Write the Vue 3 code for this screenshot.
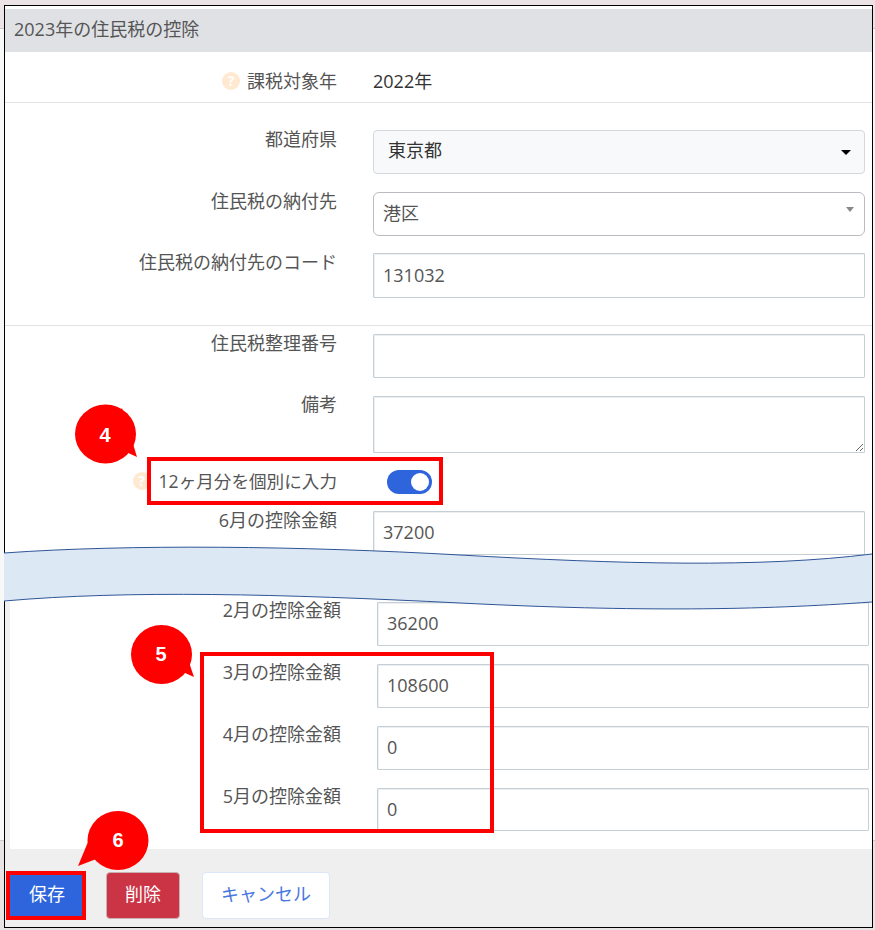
<script setup>
const upper = [
  { label: '住民税整理番号', value: '' }
]
const lower = [
  { label: '2月の控除金額', value: '36200' },
  { label: '3月の控除金額', value: '108600' },
  { label: '4月の控除金額', value: '0' },
  { label: '5月の控除金額', value: '0' }
]
const callouts = [
  { n: '4', cx: 105.5, cy: 434, tail: '122,408 137,457 100,440' },
  { n: '5', cx: 161.5, cy: 654.5, tail: '178,630 194,677 156,660' },
  { n: '6', cx: 118, cy: 840.5, tail: '98,818 78,866 125,848' }
]
</script>

<template>
  <div class="page">
    <div class="frame">
      <h2 class="head">2023年の住民税の控除</h2>

      <div class="tax-year">
        <div class="label-cell">
          <span class="help">?</span>
          <span>課税対象年</span>
        </div>
        <div class="year">2022年</div>
      </div>

      <section class="group first">
        <div class="field">
          <label class="lab">都道府県</label>
          <div class="select pref">東京都<i class="caret dark"></i></div>
        </div>
        <div class="field">
          <label class="lab">住民税の納付先</label>
          <div class="select city">港区<i class="caret grey"></i></div>
        </div>
        <div class="field">
          <label class="lab">住民税の納付先のコード</label>
          <input class="input tall" value="131032" readonly />
        </div>
      </section>

      <section class="group second">
        <div v-for="r in upper" :key="r.label" class="field">
          <label class="lab">{{ r.label }}</label>
          <input class="input" :value="r.value" readonly />
        </div>
        <div class="field">
          <label class="lab memo">備考</label>
          <textarea class="input area" readonly></textarea>
        </div>
        <div class="field toggle-row">
          <div class="toggle-label">
            <span class="help small">?</span>
            <span>12ヶ月分を個別に入力</span>
          </div>
          <span class="switch"><i></i></span>
        </div>
        <div class="field june">
          <label class="lab">6月の控除金額</label>
          <input class="input" value="37200" readonly />
        </div>
      </section>

      <section class="group shifted">
        <div v-for="r in lower" :key="r.label" class="field">
          <label class="lab">{{ r.label }}</label>
          <input class="input" :value="r.value" readonly />
        </div>
      </section>

      <footer class="foot">
        <button class="btn save">保存</button>
        <button class="btn del">削除</button>
        <button class="btn cancel">キャンセル</button>
      </footer>
    </div>

    <svg class="wave" width="875" height="930" viewBox="0 0 875 930">
      <path
        d="M4 553 C 130 544 300 546 460 555 S 760 568 872 554 L 872 602 C 760 610 640 612 460 603 S 130 590 4 601 Z"
        fill="#dde8f5"
      />
      <path d="M4 553 C 130 544 300 546 460 555 S 760 568 872 554" fill="none" stroke="#2f5597" stroke-width="1" />
      <path d="M4 601 C 130 590 280 594 460 603 S 760 610 872 602" fill="none" stroke="#2f5597" stroke-width="1" />
    </svg>

    <div class="mark m4"></div>
    <div class="mark m5"></div>
    <div class="mark m6"></div>

    <svg class="wave" width="875" height="930" viewBox="0 0 875 930">
      <g v-for="c in callouts" :key="c.n">
        <polygon :points="c.tail" fill="#ff0000" />
        <ellipse :cx="c.cx" :cy="c.cy" rx="30.5" ry="29.5" fill="#ff0000" />
      </g>
    </svg>
    <span class="num n4">4</span>
    <span class="num n5">5</span>
    <span class="num n6">6</span>
  </div>
</template>

<style>
html, body { margin: 0; overflow: hidden; background: #eee3e7; }
</style>

<style scoped>
.page {
  position: relative;
  width: 875px;
  height: 930px;
  box-sizing: border-box;
  padding: 5px 2px 2px 4px;
  background: linear-gradient(#ece3e7 0 28px, #c9c9c9 28px 29px, #f8f8f8 29px 840px, #c9c9c9 840px 841px, #e9e4e4 841px);
  font-family: "Open Sans", "Noto Sans CJK JP", sans-serif;
  font-size: 18px;
  line-height: 26px;
  color: #4a4a4a;
}
.frame {
  box-sizing: border-box;
  height: 923px;
  border: 1px solid #000;
  background: #fff;
  padding-top: 3px;
  display: flex;
  flex-direction: column;
}
.head {
  margin: 0;
  height: 43px;
  padding: 0 9px;
  background: #dfe1e5;
  font-size: 18px;
  font-weight: 400;
  line-height: 41px;
  color: #555;
}
.tax-year {
  display: grid;
  grid-template-columns: 332px 1fr;
  column-gap: 36px;
  align-items: center;
  height: 51px;
  box-sizing: border-box;
  border-bottom: 1px solid #e2e3e5;
  padding-top: 8px;
}
.label-cell {
  display: flex;
  justify-content: flex-end;
  align-items: center;
  gap: 7px;
  color: #555;
}
.year { color: #333; }
.help {
  flex: none;
  width: 18px;
  height: 18px;
  border-radius: 50%;
  background: #ffe9d1;
  color: #fff;
  font-size: 14px;
  font-weight: 700;
  line-height: 18px;
  text-align: center;
}
.help.small { margin-right: 1px; }
.group { display: flex; flex-direction: column; }
.first {
  padding: 27px 0 27px;
  border-bottom: 1px solid #e2e3e5;
  gap: 18px;
}
.first .field:last-child { margin-top: -1px; }
.second { padding-top: 8px; }
.second .field { margin-bottom: 18px; }
.field {
  display: grid;
  grid-template-columns: 332px 492px;
  column-gap: 36px;
  align-items: start;
}
.lab {
  display: block;
  margin-top: -4px;
  text-align: right;
  color: #555;
  white-space: nowrap;
}
.memo { margin-top: -5px; }
.select {
  position: relative;
  box-sizing: border-box;
  height: 44px;
  border: 1px solid #d5d9dd;
  border-radius: 4px;
  line-height: 38px;
  color: #333;
}
.pref { background: #f8f9fa; padding-left: 14px; }
.city {
  padding-left: 9px;
  border-color: #b9bdc1;
  border-radius: 6px;
  color: #555;
  line-height: 40px;
}
.caret {
  position: absolute;
  width: 0;
  height: 0;
  border-left: 5px solid transparent;
  border-right: 5px solid transparent;
}
.caret.dark { border-top: 5px solid #000; right: 13px; top: 19px; }
.caret.grey {
  border-left-width: 4px;
  border-right-width: 4px;
  border-top: 5px solid #888;
  right: 10px;
  top: 14px;
}
.input {
  display: block;
  box-sizing: border-box;
  width: 492px;
  height: 44px;
  margin: 0;
  padding: 0 9px 2px;
  border: 1px solid #c6ced6;
  border-radius: 1px;
  box-shadow: inset 1px 1px 0 #eceff2;
  background: #fff;
  font: inherit;
  color: #555;
  outline: none;
}
.tall { height: 45px; }
.area { height: 57px; padding-top: 8px; resize: vertical; }
.toggle-row {
  height: 27px;
  margin-bottom: 15px !important;
  margin-top: -2px;
  align-items: center;
}
.toggle-label {
  display: flex;
  justify-content: flex-end;
  align-items: center;
  gap: 7px;
  margin-top: -4px;
  font-size: 17.6px;
  color: #555;
  white-space: nowrap;
}
.switch {
  display: block;
  position: relative;
  width: 45px;
  height: 24px;
  margin-left: 14px;
  margin-top: -1px;
  border-radius: 12px;
  background: #2e65dc;
}
.switch i {
  position: absolute;
  top: 3px;
  right: 3px;
  width: 18px;
  height: 18px;
  border-radius: 50%;
  background: #fff;
}
.june { margin-bottom: 47px !important; }
.shifted {
  border-left: 5px solid #f0f0f0;
  gap: 18px;
  padding-bottom: 18px;
}
.shifted .lab { margin-top: -5px; }
.shifted .field { grid-template-columns: 331px 492px; }
.shifted .field:last-child .input { height: 43px; }
.foot {
  display: flex;
  flex: 1;
  align-items: flex-start;
  padding: 23px 0 0 5px;
  background: #efefef;
}
.btn {
  height: 47px;
  box-sizing: border-box;
  border-radius: 4px;
  font: inherit;
  padding: 0 0 3px;
}
.save { width: 74px; margin-right: 22px; background: #2e65dc; border: 1px solid #2e65dc; color: #fff; }
.del { width: 74px; margin-right: 22px; background: #cb3444; border: 1px solid #c9b0b4; color: #fff; }
.cancel { width: 128px; background: #fff; border: 1px solid #dbe6fb; color: #4a78e0; }
.wave {
  position: absolute;
  left: 0;
  top: 0;
  pointer-events: none;
}
.mark {
  position: absolute;
  box-sizing: border-box;
  border: 4px solid #f00;
}
.m4 { left: 147px; top: 457px; width: 296px; height: 48px; }
.m5 { left: 200px; top: 652px; width: 294px; height: 181px; }
.m6 { left: 6px; top: 871px; width: 80px; height: 49px; }
.num {
  position: absolute;
  width: 30px;
  text-align: center;
  font-family: "Liberation Sans", sans-serif;
  font-size: 20px;
  font-weight: 700;
  line-height: 24px;
  color: #fff;
}
.n4 { left: 90px; top: 423px; }
.n5 { left: 146px; top: 642px; }
.n6 { left: 103px; top: 828px; }
</style>
